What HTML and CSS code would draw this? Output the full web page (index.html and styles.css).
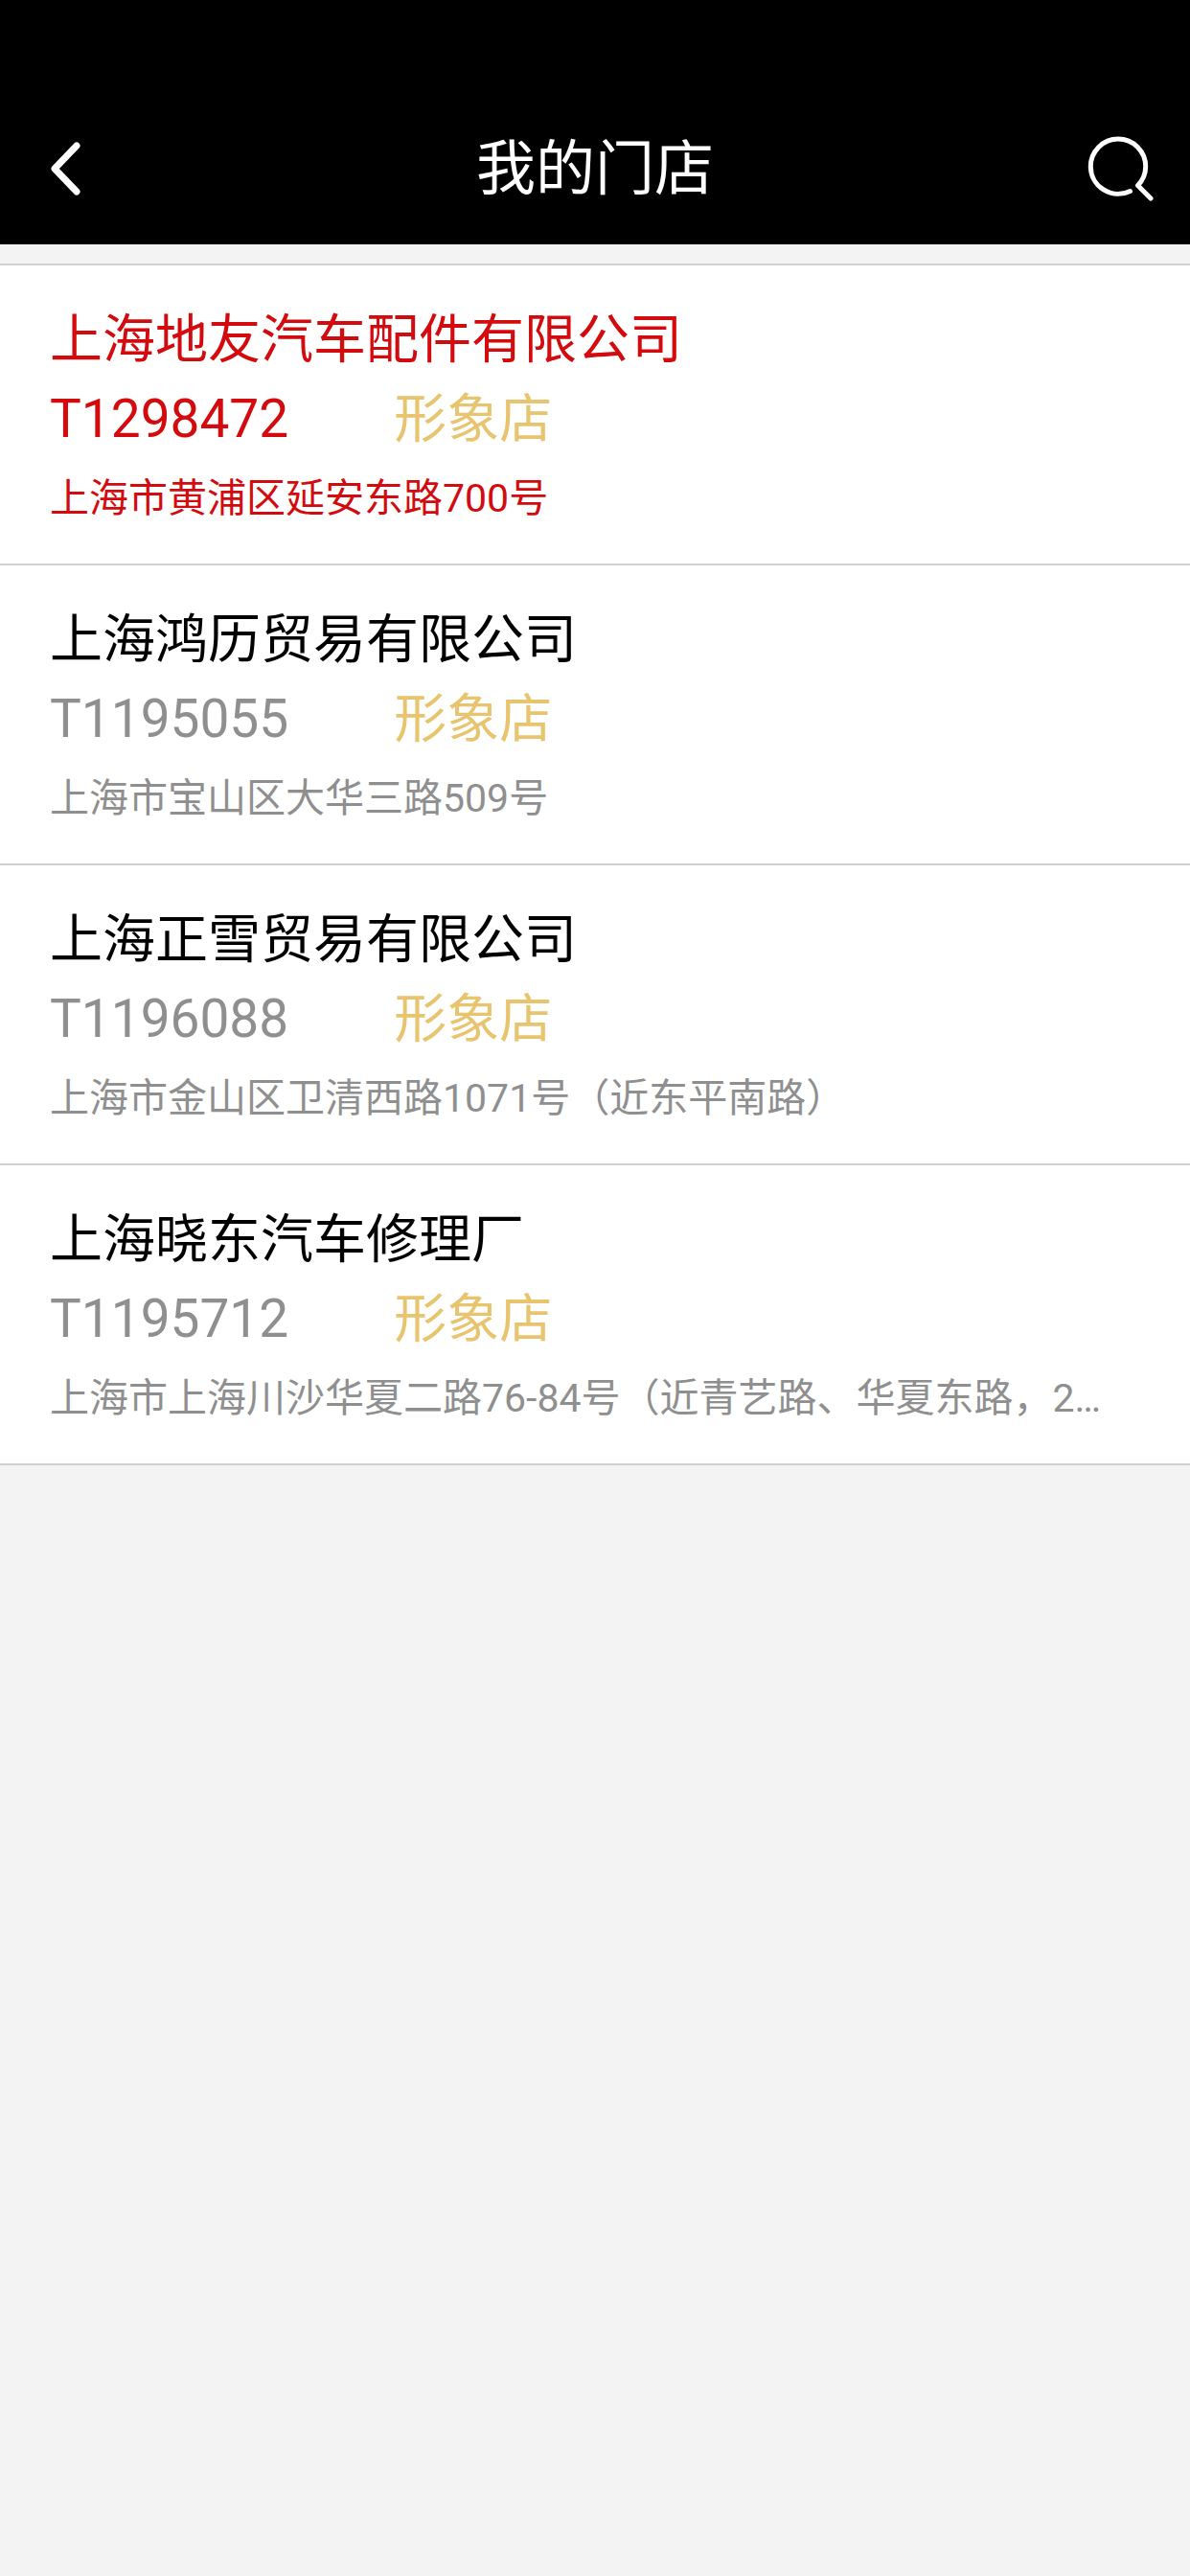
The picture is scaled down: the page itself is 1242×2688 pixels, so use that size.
FILE: index.html
```html
<!DOCTYPE html>
<html lang="zh-CN">
<head>
  <meta charset="UTF-8">
  <meta name="viewport" content="width=device-width, initial-scale=1.0">
  <title>我的门店</title>
  <link rel="stylesheet" href="styles.css">
</head>
<body>

  <header class="header">
    <button class="icon-btn back" type="button" aria-label="返回">
      <svg width="36" height="60" viewBox="0 0 36 60">
        <path d="M30 8 L7 32 L30 56" />
      </svg>
    </button>
    <h1>我的门店</h1>
    <button class="icon-btn search" type="button" aria-label="搜索">
      <svg width="72" height="72" viewBox="0 0 72 72">
        <path d="M45.5 61.5 A28.7 28.7 0 0 1 4.3 35.7 A28.7 28.7 0 0 1 61.7 35.7 A28.7 28.7 0 0 1 53.5 55.5 L67 69" />
      </svg>
    </button>
  </header>

  <main>
    <ul class="store-list">
      <li>
        <a class="store active" href="#">
          <span class="name">上海地友汽车配件有限公司</span>
          <span class="row"><span class="code">T1298472</span><span class="type">形象店</span></span>
          <span class="address">上海市黄浦区延安东路700号</span>
        </a>
      </li>
      <li>
        <a class="store" href="#">
          <span class="name">上海鸿历贸易有限公司</span>
          <span class="row"><span class="code">T1195055</span><span class="type">形象店</span></span>
          <span class="address">上海市宝山区大华三路509号</span>
        </a>
      </li>
      <li>
        <a class="store" href="#">
          <span class="name">上海正雪贸易有限公司</span>
          <span class="row"><span class="code">T1196088</span><span class="type">形象店</span></span>
          <span class="address">上海市金山区卫清西路1071号（近东平南路）</span>
        </a>
      </li>
      <li>
        <a class="store" href="#">
          <span class="name">上海晓东汽车修理厂</span>
          <span class="row"><span class="code">T1195712</span><span class="type">形象店</span></span>
          <span class="address">上海市上海川沙华夏二路76-84号（近青艺路、华夏东路，2…</span>
        </a>
      </li>
    </ul>
  </main>

</body>
</html>
```
FILE: styles.css
```css
* {
  box-sizing: border-box;
}

body {
  margin: 0;
  font-family: Roboto, "Noto Sans CJK SC", sans-serif;
  background-color: #f3f3f3;
}

/* top padding leaves room for the status bar */
.header {
  display: flex;
  align-items: center;
  padding-top: 93px;
  background-color: #000;
  color: #fff;
}

.header h1 {
  flex: 1;
  margin: 0;
  padding-top: 6px;
  font-size: 62px;
  line-height: 156px;
  font-weight: 400;
  text-align: center;
}

.icon-btn {
  display: flex;
  align-items: center;
  width: 140px;
  height: 162px;
  padding: 0;
  border: none;
  background: none;
  color: #fff;
  cursor: pointer;
}

.icon-btn svg {
  fill: none;
  stroke: currentColor;
  stroke-linecap: round;
  stroke-linejoin: round;
}

.back {
  padding-left: 50px;
}

.back svg {
  stroke-width: 7;
}

.search {
  justify-content: flex-end;
  padding-right: 36px;
}

.search svg {
  stroke-width: 5;
}

.store-list {
  list-style: none;
  margin: 20px 0 0;
  padding: 0;
  border-top: 2px solid #d0d0d0;
  background-color: #fff;
}

.store {
  display: block;
  padding: 36px 52px 26px;
  border-bottom: 2px solid #d0d0d0;
  color: #8f8f8f;
  font-size: 55px;
  line-height: 83px;
  text-decoration: none;
}

.name {
  display: block;
  color: #000;
}

.row {
  display: flex;
  gap: 110px;
}

.type {
  color: #e8c46e;
}

.address {
  display: block;
  font-size: 41px;
  line-height: 83px;
  white-space: nowrap;
  overflow: hidden;
  text-overflow: ellipsis;
}

.active,
.active .name {
  color: #d30b0e;
}
```
